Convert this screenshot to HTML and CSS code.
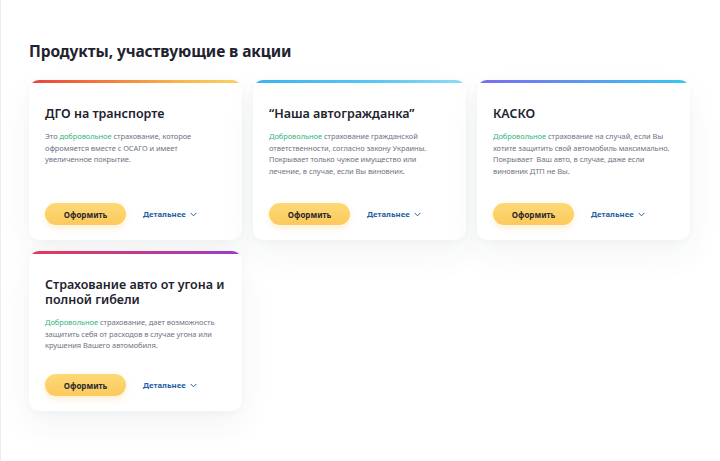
FILE: index.html
```html
<!DOCTYPE html>
<html lang="ru">
<head>
<meta charset="utf-8">
<title>Продукты</title>
<link rel="stylesheet" href="styles.css">
</head>
<body>
<main class="page">
  <h1 class="heading">Продукты, участвующие в акции</h1>
  <div class="grid">
    <article class="card card-orange">
      <h2 class="card-title">ДГО на транспорте</h2>
      <p class="card-text">Это <span class="hl">добровольное</span> страхование, которое офромяется вместе с ОСАГО и имеет увеличенное покрытие.</p>
      <div class="actions">
        <button class="btn">Оформить</button>
        <a class="more" href="#">Детальнее <svg class="chev" viewBox="0 0 8 5" width="7" height="5"><path d="M1 1l3 3 3-3" fill="none" stroke="#1f5da3" stroke-width="1.1" stroke-linecap="round" stroke-linejoin="round"/></svg></a>
      </div>
    </article>
    <article class="card card-blue">
      <h2 class="card-title">“Наша автогражданка”</h2>
      <p class="card-text"><span class="hl">Добровольное</span> страхование гражданской ответственности, согласно закону Украины. Покрывает только чужое имущество или лечение, в случае, если Вы виновник.</p>
      <div class="actions">
        <button class="btn">Оформить</button>
        <a class="more" href="#">Детальнее <svg class="chev" viewBox="0 0 8 5" width="7" height="5"><path d="M1 1l3 3 3-3" fill="none" stroke="#1f5da3" stroke-width="1.1" stroke-linecap="round" stroke-linejoin="round"/></svg></a>
      </div>
    </article>
    <article class="card card-violet">
      <h2 class="card-title">КАСКО</h2>
      <p class="card-text"><span class="hl">Добровольное</span> страхование на случай, если Вы хотите защитить свой автомобиль максимально. Покрывает&nbsp; Ваш авто, в случае, даже если виновник ДТП не Вы.</p>
      <div class="actions">
        <button class="btn">Оформить</button>
        <a class="more" href="#">Детальнее <svg class="chev" viewBox="0 0 8 5" width="7" height="5"><path d="M1 1l3 3 3-3" fill="none" stroke="#1f5da3" stroke-width="1.1" stroke-linecap="round" stroke-linejoin="round"/></svg></a>
      </div>
    </article>
    <article class="card card-pink">
      <h2 class="card-title">Страхование авто от угона и полной гибели</h2>
      <p class="card-text"><span class="hl">Добровольное</span> страхование, дает возможность защитить себя от расходов в случае угона или крушения Вашего автомобиля.</p>
      <div class="actions">
        <button class="btn">Оформить</button>
        <a class="more" href="#">Детальнее <svg class="chev" viewBox="0 0 8 5" width="7" height="5"><path d="M1 1l3 3 3-3" fill="none" stroke="#1f5da3" stroke-width="1.1" stroke-linecap="round" stroke-linejoin="round"/></svg></a>
      </div>
    </article>
  </div>
</main>
</body>
</html>
```

FILE: styles.css
```css
* { box-sizing: border-box; }
html, body { margin: 0; padding: 0; background: #ffffff; }
body {
  font-family: "Noto Sans", "Open Sans", sans-serif;
  color: #23232f;
  height: 461px;
  overflow: hidden;
  border-left: 1px solid #ececef;
}
.page {
  padding: 41px 0 0 28px;
}
.heading {
  margin: 0 0 19px 0;
  font-size: 15.5px;
  line-height: 20px;
  font-weight: 700;
  color: #22222e;
  letter-spacing: -0.1px;
}
.grid {
  display: grid;
  grid-template-columns: repeat(3, 213px);
  gap: 11px;
}
.card {
  height: 160px;
  border-radius: 10px;
  background-color: #fff;
  background-repeat: no-repeat;
  background-size: 100% 3px;
  background-position: top left;
  box-shadow: 0 14px 34px rgba(40, 50, 80, 0.055), 0 2px 8px rgba(40, 50, 80, 0.03);
  padding: 26px 16px 15px 16px;
  display: flex;
  flex-direction: column;
}
.card-orange { background-image: linear-gradient(90deg, #e9413b 0%, #f47a3a 35%, #f8b64a 70%, #fbd263 100%); }
.card-blue { background-image: linear-gradient(90deg, #37b4f0 0%, #5cc7f4 60%, #8fdcf6 100%); }
.card-violet { background-image: linear-gradient(90deg, #7d6af0 0%, #5a9af2 50%, #33c9f1 100%); }
.card-pink { background-image: linear-gradient(90deg, #e43958 0%, #c23a8e 50%, #9b3ccb 100%); }
.card-title {
  margin: 0 0 10px 0;
  font-size: 12.5px;
  line-height: 15px;
  font-weight: 600;
  color: #22222e;
}
.card-text {
  margin: 0;
  font-size: 7.5px;
  line-height: 11.6px;
  letter-spacing: -0.06px;
  color: #6f7284;
}
.hl { color: #36b37e; }
.actions {
  margin-top: auto;
  display: flex;
  align-items: center;
  gap: 17px;
}
.btn {
  width: 81px;
  height: 22px;
  border: none;
  border-radius: 11px;
  background: linear-gradient(180deg, #fdd977 0%, #fcc95c 100%);
  box-shadow: 0 3px 6px rgba(250, 190, 70, 0.25);
  font-family: inherit;
  font-size: 8px;
  font-weight: 700;
  color: #2a2a2a;
  padding: 0;
  cursor: pointer;
}
.more {
  display: flex;
  align-items: center;
  gap: 4px;
  font-size: 7.8px;
  font-weight: 700;
  color: #1f5da3;
  text-decoration: none;
}
.chev { display: block; }
```
